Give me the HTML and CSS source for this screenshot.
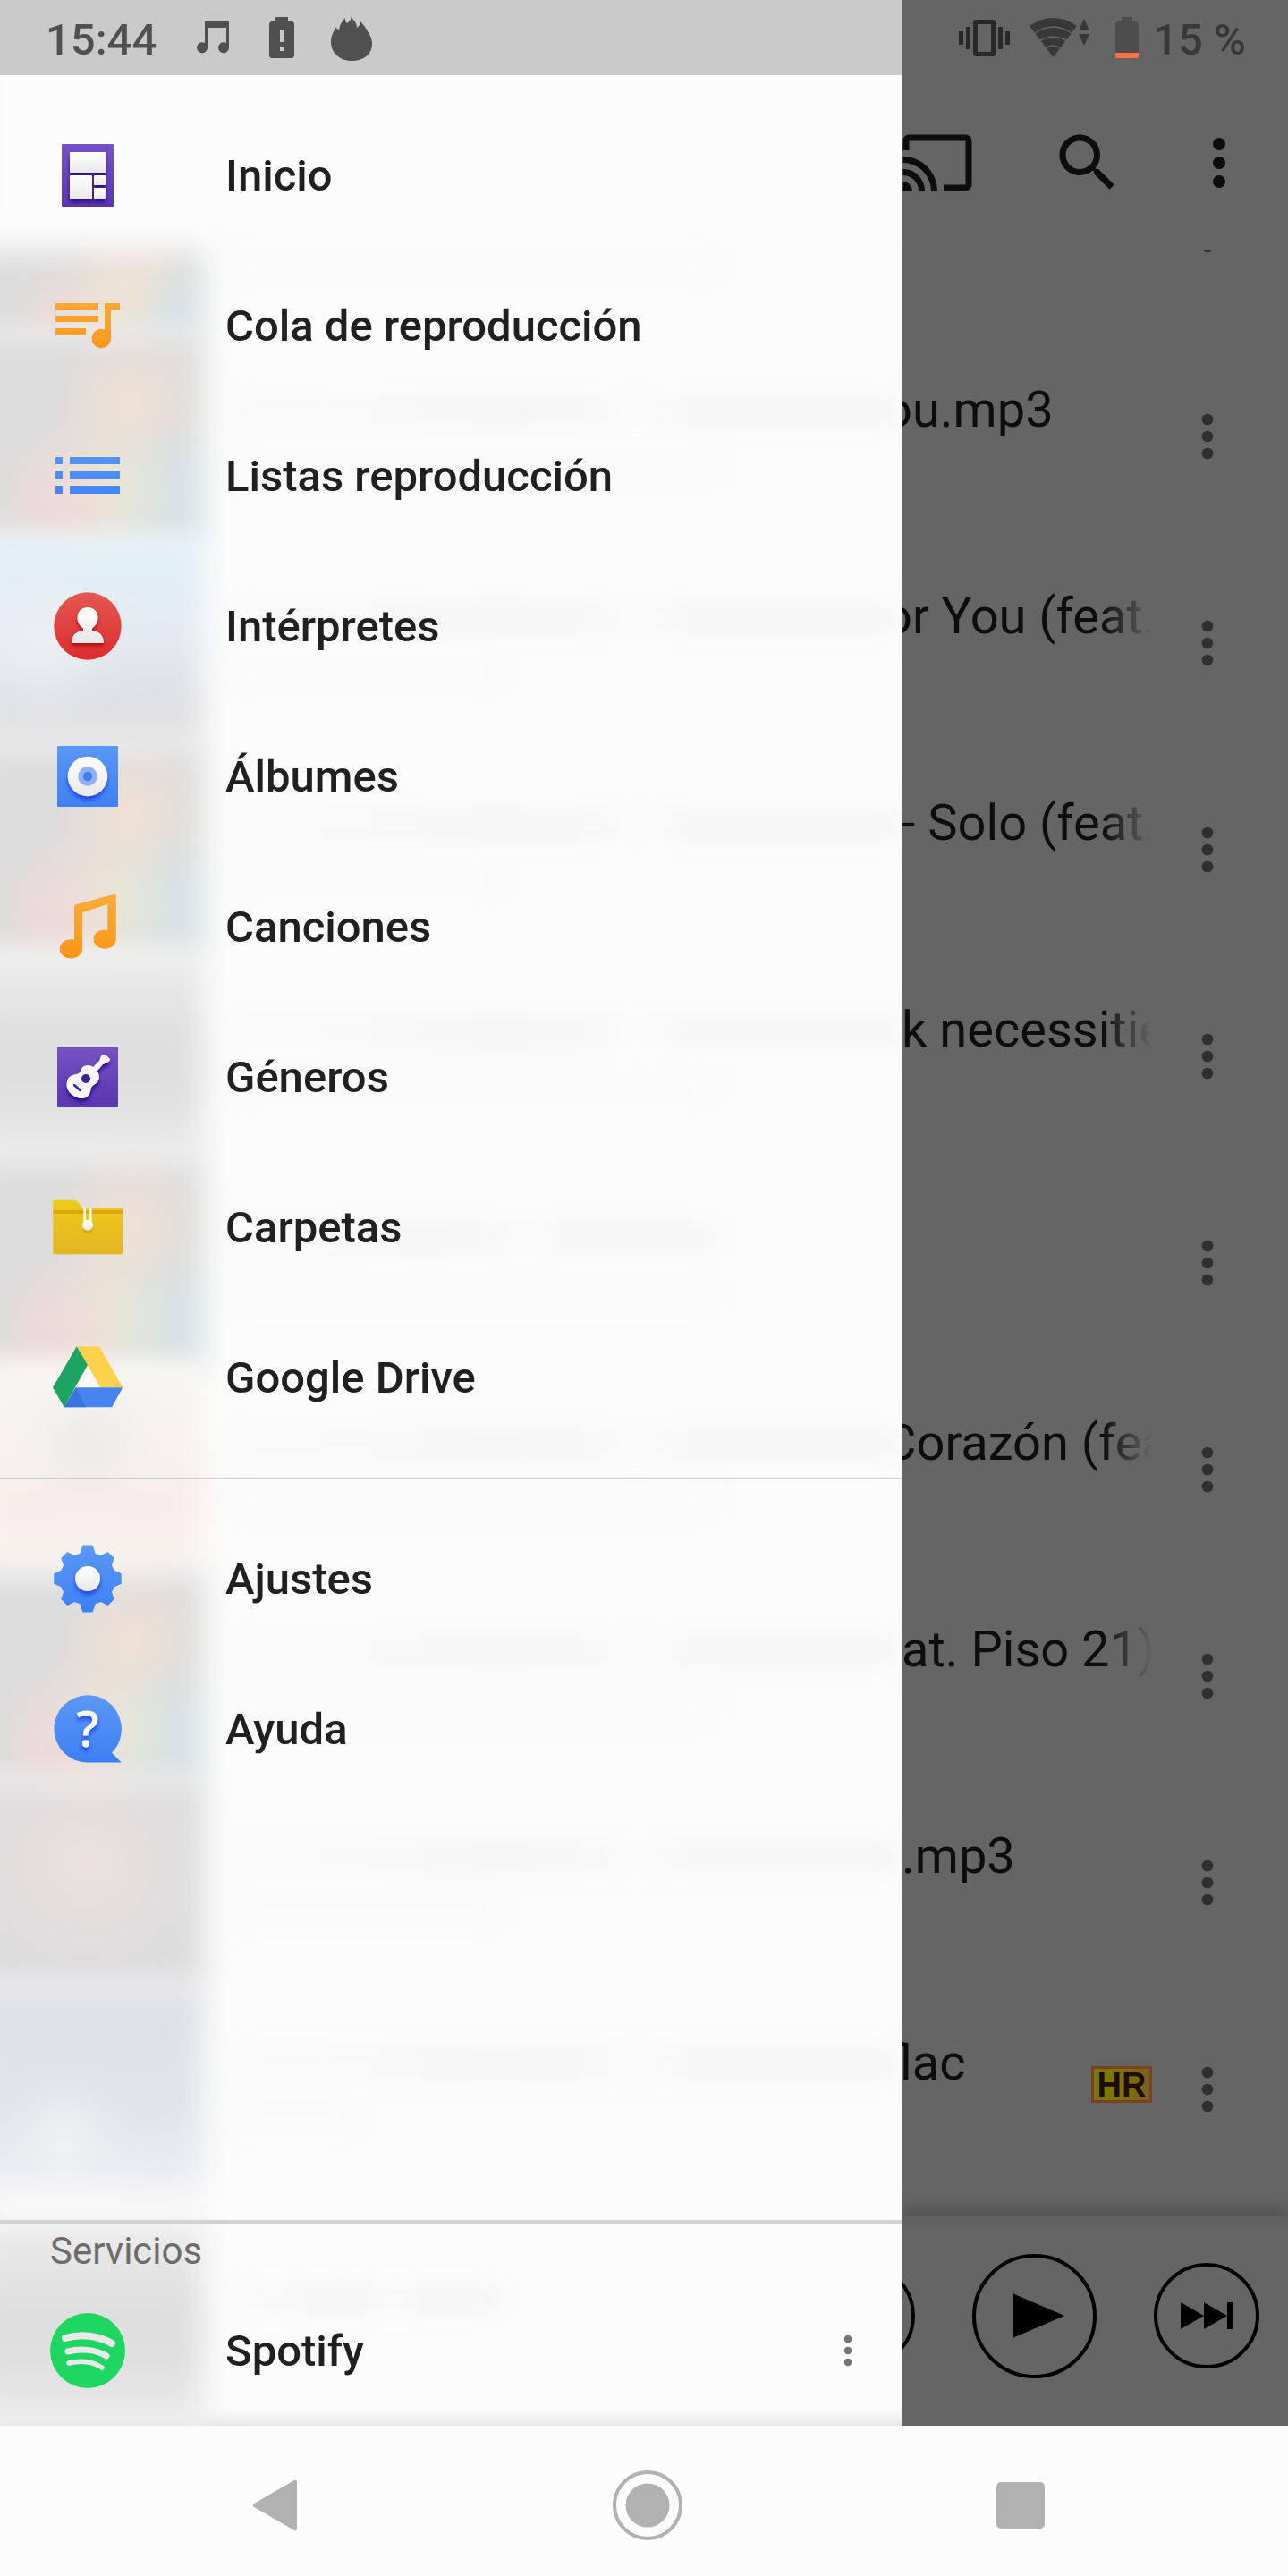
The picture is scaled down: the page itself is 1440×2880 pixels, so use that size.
FILE: index.html
```html
<!DOCTYPE html>
<html lang="es">
<head>
  <meta charset="UTF-8">
  <meta name="viewport" content="width=device-width, initial-scale=1.0">
  <title>Reproductor</title>
  <link rel="stylesheet" href="styles.css">
</head>
<body>

<!-- Shared gradients and symbols -->
<svg class="defs" aria-hidden="true">
  <defs>
    <linearGradient id="violet" x2="0" y2="1"><stop offset="0" stop-color="#7553c4"/><stop offset="1" stop-color="#5a35b0"/></linearGradient>
    <linearGradient id="orange" gradientUnits="userSpaceOnUse" x1="0" y1="6" x2="0" y2="78"><stop offset="0" stop-color="#fbab3a"/><stop offset="1" stop-color="#fa9519"/></linearGradient>
    <linearGradient id="blue" gradientUnits="userSpaceOnUse" x1="0" y1="6" x2="0" y2="78"><stop offset="0" stop-color="#5a98f6"/><stop offset="1" stop-color="#3d80f3"/></linearGradient>
    <linearGradient id="red" x2="0" y2="1"><stop offset="0" stop-color="#e5574f"/><stop offset="1" stop-color="#dc2c2f"/></linearGradient>
    <linearGradient id="white" x2="0" y2="1"><stop offset="0" stop-color="#fff"/><stop offset="1" stop-color="#e8e8e8"/></linearGradient>
    <linearGradient id="yellow" x2="0" y2="1"><stop offset="0" stop-color="#eccd18"/><stop offset="1" stop-color="#e3b522"/></linearGradient>
    <filter id="drop" x="-30%" y="-30%" width="160%" height="170%"><feDropShadow dx="0" dy="4" stdDeviation="2" flood-color="#0a2fe0" flood-opacity=".7"/></filter>
    <filter id="dropdark" x="-30%" y="-30%" width="160%" height="170%"><feDropShadow dx="0" dy="4" stdDeviation="2" flood-color="#20007a" flood-opacity=".8"/></filter>
    <filter id="dropred" x="-30%" y="-30%" width="160%" height="170%"><feDropShadow dx="0" dy="3" stdDeviation="2" flood-color="#a80000" flood-opacity=".8"/></filter>
  </defs>
  <symbol id="dots" viewBox="0 0 24 24"><circle cx="12" cy="6" r="2"/><circle cx="12" cy="12" r="2"/><circle cx="12" cy="18" r="2"/></symbol>
</svg>

<div class="screen">

  <!-- Navigation drawer -->
  <aside class="drawer">
    <div class="status status-left">
      <span class="clock">15:44</span>
      <svg class="status-icon note" viewBox="0 0 36 38"><path fill-rule="evenodd" d="M9 0h27v31a6 6 0 1 1-3-6V8H12v23a6 6 0 1 1-3-6z"/></svg>
      <svg class="status-icon alert" viewBox="0 0 28 46"><path fill-rule="evenodd" d="M7 0h14v5h5l2 2v37l-2 2H2l-2-2V7l2-2h5zM12 14v14h5V14zM12 33v5h5v-5z"/></svg>
      <svg class="status-icon flame" viewBox="0 0 46 52"><path d="M23 0c0 4 1 5 3 7 2 3 3 5 3 8 2-1 3-3 4-7 3 3 6 7 8 11 3 5 5 8 5 14 0 12-10 19-23 19S0 43 0 31c0-7 3-12 6-17 0 1 1 3 3 3 1-6 4-10 7-13 0 3 0 4 2 6 3-2 5-5 5-10z"/></svg>
    </div>

    <div class="drawer-body">
      <!-- Blurred song list behind the menu -->
      <div class="backdrop" aria-hidden="true">
        <div class="ghost ghost-first"><div class="cover collage"></div><i class="line half sub"></i></div>
        <div class="ghost"><div class="cover collage"></div><i class="line wide"></i><i class="line half sub"></i></div>
        <div class="ghost"><div class="cover sky"></div><i class="line wide"></i><i class="line short sub"></i></div>
        <div class="ghost"><div class="cover collage"></div><i class="line wide"></i><i class="line short sub"></i></div>
        <div class="ghost"><div class="cover plain"></div><i class="line wide"></i><i class="line half sub"></i></div>
        <div class="ghost"><div class="cover collage"></div><i class="line half"></i><i class="line half sub"></i></div>
        <div class="ghost"><div class="cover warm"></div><i class="line wide"></i><i class="line half sub"></i></div>
        <div class="ghost"><div class="cover collage"></div><i class="line wide"></i><i class="line half sub"></i></div>
        <div class="ghost"><div class="cover rose"></div><i class="line wide"></i><i class="line short sub"></i></div>
        <div class="ghost"><div class="cover steel"></div><i class="line wide"></i><i class="line tiny sub"></i></div>
        <div class="ghost ghost-last"><div class="cover plain"></div><i class="line short"></i></div>
      </div>

      <nav class="menu">
        <a class="item" href="#inicio">
          <svg class="icon" viewBox="0 0 84 84"><rect x="13" y="7" width="58" height="70" rx="1" fill="url(#violet)"/><g fill="url(#white)" filter="url(#dropdark)"><rect x="22" y="16" width="40" height="23"/><rect x="22" y="42" width="25" height="26"/><rect x="49" y="42" width="13" height="11"/><rect x="49" y="56" width="13" height="12"/></g></svg>
          <span>Inicio</span>
        </a>
        <a class="item" href="#cola">
          <svg class="icon" viewBox="0 0 84 84" fill="url(#orange)"><path d="M6 17h48v8H6zM6 31h48v7H6zM6 45h34v8H6zM61 17h17v8H68v32a10.700 10.700 0 1 1-7-10.500z"/></svg>
          <span>Cola de reproducción</span>
        </a>
        <a class="item" href="#listas">
          <svg class="icon" viewBox="0 0 84 84" fill="url(#blue)"><path d="M6 21h8v8H6zM22 21h56v8H22zM6 37h8v9H6zM22 37h56v9H22zM6 53h8v9H6zM22 53h56v9H22z"/></svg>
          <span>Listas reproducción</span>
        </a>
        <a class="item" href="#interpretes">
          <svg class="icon" viewBox="0 0 84 84"><circle cx="42" cy="42" r="37.700" fill="url(#red)"/><path fill="url(#white)" filter="url(#dropred)" d="M42 21c7 0 11.500 5 11.500 11.500 0 6-3 9-6.500 12v2.500c8 1 13 5 13 14H24c0-9 5-13 13-14v-2.500c-3.500-3-6.500-6-6.500-12C30.500 26 35 21 42 21z"/></svg>
          <span>Intérpretes</span>
        </a>
        <a class="item" href="#albumes">
          <svg class="icon" viewBox="0 0 84 84"><rect x="8" y="8" width="68" height="68" rx="1" fill="url(#blue)"/><circle cx="42" cy="42" r="22.300" fill="url(#white)" filter="url(#drop)"/><circle cx="42" cy="42" r="10.700" fill="#8fb0f3"/><circle cx="42" cy="42" r="5.200" fill="#3f7df2"/></svg>
          <span>Álbumes</span>
        </a>
        <a class="item" href="#canciones">
          <svg class="icon" viewBox="0 0 84 84" fill="url(#orange)"><path d="M28 17.500 72 5.700q1.700 0 1.700 2V56c0 7-6 10.700-12.700 10.700S48.500 62 48.500 56 54 45.500 61 45.500l3.300.5V17L36 26v41c0 6-6 10.500-12.700 10.500S10.700 73 10.700 67s5.500-10.700 12.600-10.700l3.700.5V19z"/></svg>
          <span>Canciones</span>
        </a>
        <a class="item" href="#generos">
          <svg class="icon" viewBox="0 0 84 84"><rect x="8" y="8" width="68" height="68" rx="1" fill="url(#violet)"/><g filter="url(#dropdark)"><path fill="#f8f7fb" d="M62 17 67 22Q67 24 65.500 25L59 28 52.500 35.500C56 40 56 46 51 49.500 46 52 46 54 45 58 42.500 67 35 67.500 28 64 21 60.500 17 54 19 47 20.500 40.500 26 39.500 31 38.500 34 37 34 35 35.500 32 38 28.500 44 28 48 31L55 24 57 18.500 60.500 17z"/></g><circle cx="40" cy="44" r="5" fill="#4322a0"/><path d="M27 51l6.500 6" stroke="#4322a0" stroke-width="2.500" stroke-linecap="round"/></svg>
          <span>Géneros</span>
        </a>
        <a class="item" href="#carpetas">
          <svg class="icon" viewBox="0 0 84 84"><path fill="url(#yellow)" d="M4.500 11.700H27q2 0 3.500 1.500L36 20h43.500q1.500 0 1.500 1.500V71q0 1.300-1.500 1.300h-75q-1.200 0-1.200-1.300V13q0-1.300 1.200-1.300z"/><path fill="#dda60e" d="M3.300 23H81v4H3.300z"/><path stroke="#fff" stroke-width="2.500" d="M38.700 20v16M45.300 20v16"/><circle cx="42" cy="43" r="6" fill="#b98300" opacity=".35"/><circle cx="42" cy="39.700" r="6" fill="url(#white)"/></svg>
          <span>Carpetas</span>
        </a>
        <a class="item" href="#drive">
          <svg class="icon" viewBox="0 0 84 84"><path fill="#fafafa" d="M42 28l15 26H28z"/><path fill="#ffd04c" d="M29.700 7.300H55l26.300 46h-25z"/><path fill="#4684f4" d="M28.700 53.300h52.600L69 75.300H15.700z"/><path fill="#3c74dd" d="M28.700 53.300 40 75.300H15.700z"/><path fill="#1da462" d="M29.700 7.300 42 28 15.700 75.300 3 53.300z"/></svg>
          <span>Google Drive</span>
        </a>
      </nav>

      <nav class="menu menu-extra">
        <a class="item" href="#ajustes">
          <svg class="icon" viewBox="0 0 84 84"><path fill="url(#blue)" d="M36.500 4.500h11l3.200 9.200 6 2.300 8-4 7 7-2.700 8 2.700 5.700 8 3.600v11.400l-8 3.600-2.700 5.700 2.700 8-7 7-8-4-6 2.300-3.200 9.200h-11l-3.200-9.200-6-2.300-8 4-7-7 2.700-8-2.700-5.700-8-3.600V36.300l8-3.600 2.700-5.700-2.700-8 7-7 8 4 6-2.300z"/><circle cx="42" cy="42" r="14" fill="url(#white)" filter="url(#drop)"/></svg>
          <span>Ajustes</span>
        </a>
        <a class="item" href="#ayuda">
          <svg class="icon" viewBox="0 0 84 84"><path fill="url(#blue)" d="M42 4.300A37.700 37.700 0 0 1 69 68.500L79.700 79.500H42A37.600 37.600 0 0 1 42 4.300z"/><text class="question" x="42" y="62" text-anchor="middle" filter="url(#drop)">?</text></svg>
          <span>Ayuda</span>
        </a>
      </nav>

      <section class="services">
        <h2>Servicios</h2>
        <div class="service-row">
          <a class="item" href="#spotify">
            <svg class="icon spotify" viewBox="-4 -4 92 92"><circle cx="42" cy="42" r="42" fill="#1ed760"/><g fill="none" stroke="#e9e9e9" stroke-linecap="round"><path stroke-width="8" d="M17 28c17-5 37-3 52 6"/><path stroke-width="7" d="M20 43c15-4 31-2 43 5"/><path stroke-width="5.500" d="M21 56c13-3 26-2 37 5"/></g></svg>
            <span>Spotify</span>
          </a>
          <button class="more more-service" aria-label="Opciones"><svg><use href="#dots"/></svg></button>
        </div>
      </section>
    </div>
  </aside>

  <!-- Song list, dimmed while the drawer is open -->
  <main class="player">
    <div class="status status-right">
      <svg class="status-icon vibrate" viewBox="0 0 57 41"><path fill-rule="evenodd" d="M0 13h5v15H0zM8 8h5v25H8zM44 8h5v25h-5zM52 13h5v15h-5zM19 0h19q3 0 3 3v35q0 3-3 3H19q-3 0-3-3V3q0-3 3-3zM21 5v31h15V5z"/></svg>
      <svg class="status-icon wifi" viewBox="0 0 68 44"><path d="M0 9q26-18 53 0L26.500 44z"/><path fill="none" stroke="#656565" stroke-width="1.500" d="M6 17q20-14 41 0M12 25.500q14-9 29 0M18 34q8-6 17 0"/><path d="M61 1l6 13H55zM61 31l6-13H55z"/></svg>
      <svg class="status-icon battery" viewBox="0 0 26 46"><path fill="#4d4d4d" d="M7 0h12v5h5l2 2v33H0V7l2-2h5z"/><path fill="#ff7043" d="M0 40h26v4q0 2-2 2H2q-2 0-2-2z"/></svg>
      <span class="clock">15 %</span>
    </div>

    <div class="toolbar">
      <button aria-label="Enviar"><svg viewBox="0 0 24 24"><path d="M21 3H3c-1.100 0-2 .9-2 2v3h2V5h18v14h-7v2h7c1.100 0 2-.9 2-2V5c0-1.100-.9-2-2-2zM1 18v3h3c0-1.660-1.340-3-3-3zm0-4v2c2.760 0 5 2.240 5 5h2c0-3.870-3.130-7-7-7zm0-4v2c4.970 0 9 4.030 9 9h2c0-6.080-4.930-11-11-11z"/></svg></button>
      <button class="search" aria-label="Buscar"><svg viewBox="0 0 24 24"><path d="M15.500 14h-.79l-.28-.27C15.410 12.590 16 11.110 16 9.500 16 5.910 13.090 3 9.500 3S3 5.910 3 9.500 5.910 16 9.500 16c1.610 0 3.090-.59 4.230-1.570l.27.28v.79l5 4.990L20.490 19l-4.990-5zm-6 0C7.010 14 5 11.990 5 9.500S7.010 5 9.500 5 14 7.010 14 9.500 11.990 14 9.500 14z"/></svg></button>
      <button aria-label="Más"><svg><use href="#dots"/></svg></button>
    </div>

    <ul class="songs">
      <li><span class="title"></span><button class="more" aria-label="Opciones"><svg><use href="#dots"/></svg></button></li>
      <li><span class="title tucked">ou.mp3</span><button class="more" aria-label="Opciones"><svg><use href="#dots"/></svg></button></li>
      <li><span class="title tucked">or You (feat.</span><button class="more" aria-label="Opciones"><svg><use href="#dots"/></svg></button></li>
      <li><span class="title">- Solo (feat.</span><button class="more" aria-label="Opciones"><svg><use href="#dots"/></svg></button></li>
      <li><span class="title">k necessities</span><button class="more" aria-label="Opciones"><svg><use href="#dots"/></svg></button></li>
      <li><span class="title"></span><button class="more" aria-label="Opciones"><svg><use href="#dots"/></svg></button></li>
      <li><span class="title tucked">Corazón (feat.</span><button class="more" aria-label="Opciones"><svg><use href="#dots"/></svg></button></li>
      <li><span class="title">at. Piso 21)</span><button class="more" aria-label="Opciones"><svg><use href="#dots"/></svg></button></li>
      <li><span class="title">.mp3</span><button class="more" aria-label="Opciones"><svg><use href="#dots"/></svg></button></li>
      <li><span class="title tucked">flac</span><span class="badge">HR</span><button class="more" aria-label="Opciones"><svg><use href="#dots"/></svg></button></li>
    </ul>

    <div class="controls">
      <button class="round" aria-label="Anterior"></button>
      <button class="round play" aria-label="Reproducir"><svg viewBox="0 0 58 50"><path d="M0 0l58 25L0 50z"/></svg></button>
      <button class="round" aria-label="Siguiente"><svg viewBox="0 0 58 30"><path d="M0 0l26 15L0 30zM26 0l26 15-26 15zM52 0h6v30h-6z"/></svg></button>
    </div>
  </main>
</div>

<!-- System navigation -->
<footer class="system">
  <button aria-label="Atrás"><svg viewBox="0 0 84 84"><path d="M64 14q3-1 3 2v52q0 3-3 2L19 44q-2-2 0-4z"/></svg></button>
  <button aria-label="Inicio del sistema"><svg viewBox="0 0 84 84"><circle cx="42" cy="42" r="37" fill="none" stroke="#b1b1b1" stroke-width="4"/><circle cx="42" cy="42" r="24.500"/></svg></button>
  <button aria-label="Recientes"><svg viewBox="0 0 84 84"><rect x="15" y="16" width="54" height="52" rx="5"/></svg></button>
</footer>

</body>
</html>
```

FILE: styles.css
```css
* {
  box-sizing: border-box;
}

body {
  margin: 0;
  min-height: 100vh;
  display: flex;
  flex-direction: column;
  background: #fcfcfc;
  font-family: Roboto, sans-serif;
}

button {
  padding: 0;
  border: none;
  background: none;
  color: inherit;
}

svg {
  display: block;
}

.defs {
  position: absolute;
  width: 0;
  height: 0;
}

.screen {
  flex: 1;
  display: flex;
}

/* Status bar */
.status {
  height: 84px;
  display: flex;
  align-items: center;
  flex-shrink: 0;
  font-size: 49px;
  font-weight: 500;
}

.status-icon {
  flex-shrink: 0;
  fill: currentColor;
}

.status-left {
  padding-left: 51px;
  gap: 45px;
  background: #cacaca;
  color: #505050;
}

.status-right {
  padding-right: 47px;
  justify-content: flex-end;
  gap: 22px;
  color: #383838;
}

.clock {
  line-height: 84px;
  padding-top: 6px;
}

.note { width: 36px; height: 38px; }
.alert { width: 28px; height: 46px; }
.flame { width: 46px; height: 52px; margin-left: -4px; }
.vibrate { width: 57px; height: 41px; color: #282828; }
.wifi { width: 68px; height: 44px; }
.battery { width: 26px; height: 46px; margin-left: 6px; }

.status-right .clock {
  margin-left: -6px;
}

/* Drawer */
.drawer {
  width: 70%;
  display: flex;
  flex-direction: column;
}

.drawer-body {
  flex: 1;
  position: relative;
  display: flex;
  flex-direction: column;
  background: #fcfcfc;
}

.menu,
.services {
  position: relative;
}

.menu {
  padding: 28px 0;
}

.menu-extra {
  border-top: 1px solid #c8c8c8;
}

.item {
  height: 168px;
  padding-left: 56px;
  display: flex;
  align-items: center;
  gap: 112px;
  color: #202020;
  font-size: 49px;
  font-weight: 500;
  text-decoration: none;
}

.icon {
  width: 84px;
  height: 84px;
}

.spotify {
  width: 92px;
  height: 92px;
  margin: 0 -4px;
}

.question {
  font-family: "Open Sans", sans-serif;
  font-size: 56px;
  font-weight: 600;
  fill: #fafafa;
}

.services {
  margin-top: auto;
  border-top: 4px solid #d2d2d2;
}

.services h2 {
  margin: 0;
  padding: 4px 0 0 56px;
  color: #6c6c6c;
  font-size: 42px;
  font-weight: 400;
  line-height: 54px;
}

.service-row {
  display: flex;
  padding-right: 34px;
  align-items: center;
}

.service-row .item {
  flex: 1;
}

/* Blurred covers and lines */
.backdrop {
  position: absolute;
  top: 0;
  right: 0;
  bottom: 0;
  left: 0;
  overflow: hidden;
  padding-top: 196px;
  box-shadow: inset 0 -20px 20px -16px rgba(0, 0, 0, 0.12);
}

.ghost {
  position: relative;
  height: 231px;
}

.ghost-first {
  height: 93px;
}

.ghost-last {
  margin-top: 32px;
}

.cover {
  width: 260px;
  height: 100%;
  margin-left: -32px;
  background-color: #dcdcdc;
  filter: blur(16px);
}

.collage {
  background-image:
    radial-gradient(circle at 38% 82%, #f2d9d9 0, transparent 32%),
    radial-gradient(circle at 68% 32%, #f3e2d4 0, transparent 34%),
    radial-gradient(circle at 58% 76%, #ebe9d2 0, transparent 38%),
    radial-gradient(circle at 84% 78%, #d3e4e8 0, transparent 32%);
}

.sky {
  background-image:
    radial-gradient(circle at 30% 50%, #eeeff3 0, transparent 40%),
    linear-gradient(to bottom, #e0f0f6, #e4ebf0 45%, #dfe0e3 75%, #e4e4e5);
}

.plain {
  background-image: linear-gradient(to bottom, #ececec, #dedede 45%, #e0e0e0 70%, #eeeded);
}

.warm {
  background-image:
    radial-gradient(circle at 50% 35%, #ebebea 0, transparent 40%),
    linear-gradient(to bottom, #f8f6f1, #f6f3ee 40%, #f6ece8 65%, #f8f5ef);
}

.rose {
  background-image: radial-gradient(circle at 50% 40%, #eae2e1, #dddcdd 65%);
}

.steel {
  background-image:
    radial-gradient(circle at 40% 72%, #f1f3f2 0, transparent 30%),
    linear-gradient(to bottom, #dfe0e5, #e0e4e9 60%, #efeff3);
}

.line {
  position: absolute;
  top: 70px;
  left: 258px;
  height: 32px;
  background: linear-gradient(to right, #f8f8f8 10%, #f4f4f4 40%, #f6f6f6 56%, #fbfbfb 60%, #f5f5f5 68%);
  filter: blur(12px);
}

.sub {
  top: 132px;
  background: #f9f9f9;
}

.ghost-first .sub {
  top: 0;
}

.wide { width: calc(100% - 258px); }
.half { width: 540px; }
.short { width: 300px; }
.tiny { width: 140px; }

/* Song list */
.player {
  flex: 1;
  min-width: 0;
  display: flex;
  flex-direction: column;
  overflow: hidden;
  background: #656565;
  color: #0d0d0d;
}

.toolbar {
  height: 196px;
  padding-right: 35px;
  display: flex;
  justify-content: flex-end;
  align-items: center;
  border-bottom: 1px solid #626262;
}

.toolbar button {
  flex-shrink: 0;
}

.toolbar svg {
  width: 84px;
  height: 84px;
  fill: currentColor;
}

.toolbar .search {
  margin: 0 63px 0 84px;
}

.songs {
  flex: 1 0 0;
  min-height: 0;
  margin: 0;
  padding: 0 0 26px;
  display: flex;
  flex-direction: column;
  justify-content: flex-end;
  overflow: hidden;
  list-style: none;
}

.songs li {
  height: 231px;
  flex-shrink: 0;
  padding-right: 52px;
  display: flex;
  align-items: center;
}

.title {
  flex: 1;
  min-width: 0;
  height: 64px;
  margin-bottom: 60px;
  overflow: hidden;
  font-size: 56px;
  line-height: 64px;
  white-space: nowrap;
}

.songs li .title:nth-last-child(2) {
  margin-right: 24px;
  -webkit-mask-image: linear-gradient(to left, transparent, #000 56px);
  mask-image: linear-gradient(to left, transparent, #000 56px);
}

/* first letter partly hidden under the drawer */
.tucked {
  text-indent: -20px;
}

.badge {
  width: 68px;
  height: 41px;
  margin: 0 24px 10px 0;
  border: 3px solid #7a431f;
  background: linear-gradient(to right, #78780c, #7f7600 40%, #7d5f1e);
  color: #1d0e02;
  font-family: "Liberation Sans", sans-serif;
  font-size: 38px;
  font-weight: 700;
  line-height: 36px;
  text-align: center;
}

.more svg {
  width: 76px;
  height: 76px;
  fill: #2f2f2f;
}

.more-service svg {
  width: 52px;
  height: 52px;
  fill: #757575;
}

/* Mini player */
.controls {
  height: 235px;
  padding: 0 32px 22px 0;
  display: flex;
  flex-shrink: 0;
  align-items: center;
  justify-content: flex-end;
  gap: 64px;
  border-top: 11px solid #606060;
  box-shadow: 0 -8px 16px rgba(0, 0, 0, 0.2);
  color: #000;
}

.round {
  width: 118px;
  height: 118px;
  flex-shrink: 0;
  display: flex;
  align-items: center;
  justify-content: center;
  border: 4px solid #000;
  border-radius: 50%;
}

.round svg {
  width: 58px;
}

.play {
  width: 139px;
  height: 139px;
}

.play svg {
  margin-left: 8px;
}

/* System bar */
.system {
  height: 168px;
  padding: 10px 90px 0 98px;
  display: grid;
  grid-template-columns: 1fr 1fr 1fr;
  align-items: center;
  justify-items: center;
}

.system svg {
  width: 84px;
  height: 84px;
  fill: #b1b1b1;
}
```
